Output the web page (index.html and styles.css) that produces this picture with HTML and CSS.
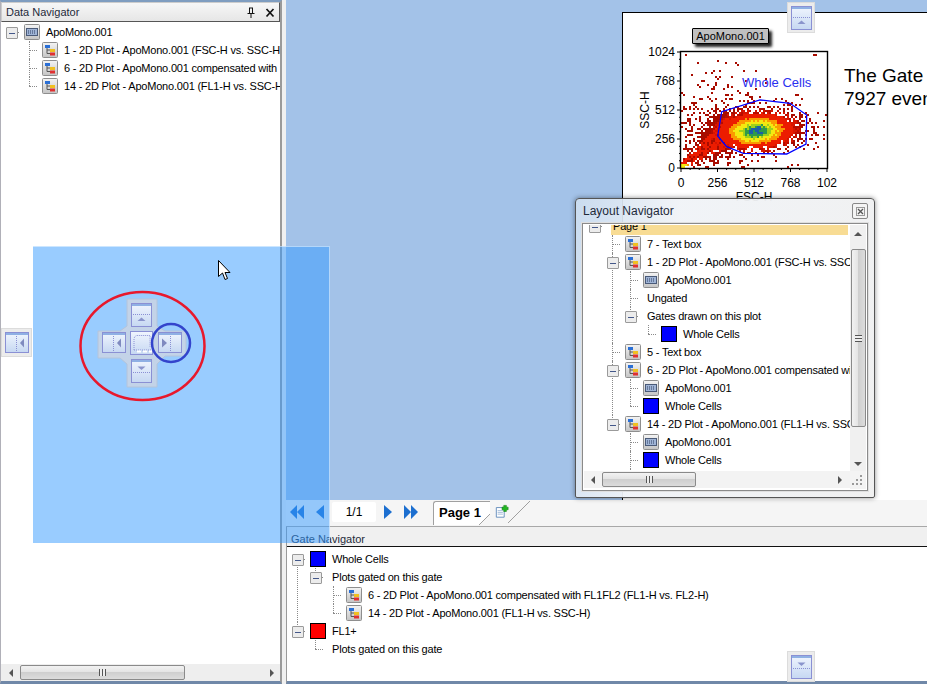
FILE: index.html
```html
<!DOCTYPE html>
<html lang="en">

<head>
    <meta charset="UTF-8">
    <title>Layout Navigator</title>
    <link rel="stylesheet" href="styles.css">
</head>

<body>
    <!-- shared icons -->
    <svg class="defs" width="0" height="0">
        <defs>
            <linearGradient id="iconbg" x1="0" y1="0" x2="0" y2="1">
                <stop offset="0" stop-color="#f4f4f4" />
                <stop offset="1" stop-color="#c4c4c4" />
            </linearGradient>
            <linearGradient id="dockbg" x1="0" y1="0" x2="0" y2="1">
                <stop offset="0" stop-color="#f0f5fe" />
                <stop offset="1" stop-color="#c6d8f2" />
            </linearGradient>
            <symbol id="plot" viewBox="0 0 16 16">
                <rect x=".5" y=".5" width="15" height="15" rx="1" fill="url(#iconbg)" stroke="#8e8e8e" />
                <path d="M5 5V11.5H9M5 8H9" fill="none" stroke="#555" />
                <rect x="3" y="3" width="5" height="3" fill="#2a6fd6" />
                <rect x="8" y="7" width="5" height="3" fill="#f0c020" />
                <rect x="8" y="10.5" width="5" height="3" fill="#e03030" />
            </symbol>
            <symbol id="fcs" viewBox="0 0 16 16">
                <rect x=".5" y=".5" width="15" height="15" rx="1" fill="url(#iconbg)" stroke="#8e8e8e" />
                <rect x="2.5" y="4.5" width="11" height="7" fill="#9fb4d6" stroke="#4a5a78" />
                <path d="M4 7H12M4 9H12" stroke="#2f3f60" stroke-dasharray="1 1" />
            </symbol>
            <symbol id="dock-up" viewBox="0 0 21 24">
                <rect x=".5" y=".5" width="20" height="23" fill="url(#dockbg)" stroke="#8a90d4" />
                <rect x="1" y="1" width="19" height="2" fill="#8fb0e4" />
                <path d="M2 11.5H19" stroke="#8a90d4" stroke-dasharray="1 1" />
                <path d="M10.5 14.5L14.5 18H6.5Z" fill="#8a94cc" />
            </symbol>
            <symbol id="dock-down" viewBox="0 0 21 24">
                <rect x=".5" y=".5" width="20" height="23" fill="url(#dockbg)" stroke="#8a90d4" />
                <rect x="1" y="1" width="19" height="2" fill="#8fb0e4" />
                <path d="M2 13.5H19" stroke="#8a90d4" stroke-dasharray="1 1" />
                <path d="M10.5 11L14.5 7.5H6.5Z" fill="#8a94cc" />
            </symbol>
            <symbol id="dock-left" viewBox="0 0 24 21">
                <rect x=".5" y=".5" width="23" height="20" fill="url(#dockbg)" stroke="#8a90d4" />
                <rect x="1" y="1" width="22" height="2" fill="#8fb0e4" />
                <path d="M11.5 4V20" stroke="#8a90d4" stroke-dasharray="1 1" />
                <path d="M15 11L19 6.5V15.5Z" fill="#7f8abf" />
            </symbol>
            <symbol id="dock-right" viewBox="0 0 24 21">
                <rect x=".5" y=".5" width="23" height="20" fill="url(#dockbg)" stroke="#8a90d4" />
                <rect x="1" y="1" width="22" height="2" fill="#8fb0e4" />
                <path d="M12.5 4V20" stroke="#8a90d4" stroke-dasharray="1 1" />
                <path d="M9 11L4 6.5V15.5Z" fill="#7f8abf" />
            </symbol>
        </defs>
    </svg>

    <div class="app">
        <!-- left pane -->
        <section class="data-pane">
            <header class="pane-title">
                <span>Data Navigator</span>
                <span class="pane-btns">
                    <svg width="10" height="11" viewBox="0 0 10 11">
                        <path d="M3 1H7M3.5 1V6M6.5 1V6M1.5 6.5H8.5M5 7V11" fill="none" stroke="#111" />
                    </svg>
                    <svg width="10" height="11" viewBox="0 0 10 11">
                        <path d="M1.5 2L8.5 9.5M8.5 2L1.5 9.5" fill="none" stroke="#111" stroke-width="1.7" />
                    </svg>
                </span>
            </header>
            <div class="pane-body">
                <ul class="tree tree-data">
                    <li>
                        <div class="node"><span class="tw open"></span><svg class="ic"><use href="#fcs" /></svg><span class="lbl">ApoMono.001</span></div>
                        <ul>
                            <li><div class="node"><span class="tw"></span><svg class="ic"><use href="#plot" /></svg><span class="lbl">1 - 2D Plot - ApoMono.001 (FSC-H vs. SSC-H)</span></div></li>
                            <li><div class="node"><span class="tw"></span><svg class="ic"><use href="#plot" /></svg><span class="lbl">6 - 2D Plot - ApoMono.001 compensated with FL1FL2 (FL1-H vs. FL2-H)</span></div></li>
                            <li><div class="node"><span class="tw"></span><svg class="ic"><use href="#plot" /></svg><span class="lbl">14 - 2D Plot - ApoMono.001 (FL1-H vs. SSC-H)</span></div></li>
                        </ul>
                    </li>
                </ul>
            </div>
            <div class="hscroll hscroll-data">
                <span class="arr arr-l"></span>
                <span class="hthumb"><i></i></span>
                <span class="arr arr-r"></span>
            </div>
        </section>

        <div class="splitter"></div>

        <!-- right side -->
        <section class="main">
            <div class="doc-area">
                <div class="sheet">
                    <div class="plot-box">
                        <div class="plot-name">ApoMono.001</div>
                        <svg id="plot-svg" class="plot-svg" width="205" height="190" viewBox="0 0 205 190"></svg>
                    </div>
                    <div class="gate-text">
                        <div>The Gate</div>
                        <div>7927 events</div>
                    </div>
                </div>
            </div>

            <div class="tab-strip">
                <span class="pager">
                    <svg width="15" height="14" viewBox="0 0 15 14"><path d="M7 0V14L0 7ZM14 0V14L7 7Z" fill="#1c6fd0" /></svg>
                    <svg class="gap-l" width="10" height="14" viewBox="0 0 10 14"><path d="M9 0V14L1 7Z" fill="#1c6fd0" /></svg>
                </span>
                <span class="page-input">1/1</span>
                <span class="pager">
                    <svg width="10" height="14" viewBox="0 0 10 14"><path d="M1 0V14L9 7Z" fill="#1c6fd0" /></svg>
                    <svg class="gap-l" width="15" height="14" viewBox="0 0 15 14"><path d="M1 0V14L8 7ZM8 0V14L15 7Z" fill="#1c6fd0" /></svg>
                </span>
                <span class="tab">Page 1</span>
                <span class="tab-new">
                    <svg width="14" height="15" viewBox="0 0 16 16">
                        <path d="M1.5 3.5H10.5V14.5H1.5Z" fill="#fff" stroke="#5a86b8" />
                        <path d="M3 7H9M3 9H9M3 11H9" stroke="#9ab6d6" />
                        <path d="M8 3H10V1H13V3H15V6H13V8H10V6H8Z" fill="#22b822" stroke="#0c7a0c" stroke-width=".6" />
                    </svg>
                </span>
            </div>

            <section class="gate-pane">
                <header class="gate-title">Gate Navigator</header>
                <div class="gate-body">
                    <ul class="tree tree-gate">
                        <li>
                            <div class="node"><span class="tw open"></span><span class="swatch blue"></span><span class="lbl">Whole Cells</span></div>
                            <ul>
                                <li>
                                    <div class="node"><span class="tw open"></span><span class="lbl bare">Plots gated on this gate</span></div>
                                    <ul>
                                        <li><div class="node"><span class="tw"></span><svg class="ic"><use href="#plot" /></svg><span class="lbl">6 - 2D Plot - ApoMono.001 compensated with FL1FL2 (FL1-H vs. FL2-H)</span></div></li>
                                        <li><div class="node"><span class="tw"></span><svg class="ic"><use href="#plot" /></svg><span class="lbl">14 - 2D Plot - ApoMono.001 (FL1-H vs. SSC-H)</span></div></li>
                                    </ul>
                                </li>
                            </ul>
                        </li>
                        <li>
                            <div class="node"><span class="tw open"></span><span class="swatch red"></span><span class="lbl">FL1+</span></div>
                            <ul>
                                <li><div class="node"><span class="tw"></span><span class="lbl bare">Plots gated on this gate</span></div></li>
                            </ul>
                        </li>
                    </ul>
                </div>
            </section>
        </section>

        <!-- dock preview + guides, dragged over the panes -->
        <div class="dock-preview"></div>

        <svg class="guide-cross" width="140" height="120" viewBox="70 285 140 120">
            <path d="M127 299H157V326L165 331H186V356H165L157 364V387H127V364L120 358H98V331H120L127 326Z" fill="#c3d3e8" stroke="#b4c4da" />
            <use href="#dock-up" x="131" y="303" width="21" height="24" />
            <use href="#dock-left" x="102" y="332" width="24" height="21" />
            <use href="#dock-right" x="158" y="332" width="24" height="21" />
            <use href="#dock-down" x="131" y="359" width="21" height="24" />
            <rect x="130.500" y="331.500" width="22" height="23" fill="url(#dockbg)" stroke="#8a90d4" />
            <path d="M134 350V338L136 335.500H150V347M134 350H152" fill="none" stroke="#8a90d4" stroke-dasharray="1 1" />
            <path d="M137 351.500H141M143 351.500H147M149 351.500H152" stroke="#fff" stroke-width="2" />
            <ellipse cx="142.500" cy="346" rx="62" ry="54" fill="none" stroke="#e8182c" stroke-width="2.500" />
            <circle cx="171" cy="343" r="19" fill="none" stroke="#3344cc" stroke-width="2.500" />
        </svg>

        <svg class="cursor" width="13" height="21" viewBox="0 0 13 21">
            <path d="M.5 .5V16.500L4.500 13L7 19.500L9.500 18.500L7 12.500H12Z" fill="#fff" stroke="#000" />
        </svg>

        <div class="guide guide-left"><svg width="24" height="21"><use href="#dock-left" /></svg></div>
        <div class="guide guide-top"><svg width="21" height="24"><use href="#dock-up" /></svg></div>
        <div class="guide guide-bottom"><svg width="21" height="24"><use href="#dock-down" /></svg></div>

        <!-- floating window -->
        <div class="win">
            <div class="win-title">
                <span>Layout Navigator</span>
                <span class="win-close">
                    <svg width="9" height="9" viewBox="0 0 9 9">
                        <rect x=".5" y=".5" width="8" height="8" fill="none" stroke="#999" />
                        <path d="M2 2L7 7M7 2L2 7" stroke="#555" stroke-width="1.300" />
                    </svg>
                </span>
            </div>
            <div class="win-body">
                <div class="win-tree">
                    <ul class="tree tree-layout">
                        <li>
                            <div class="node"><span class="tw open"></span><span class="lbl bare page-row">Page 1</span></div>
                            <ul>
                                <li><div class="node"><span class="tw"></span><svg class="ic"><use href="#plot" /></svg><span class="lbl">7 - Text box</span></div></li>
                                <li>
                                    <div class="node"><span class="tw open"></span><svg class="ic"><use href="#plot" /></svg><span class="lbl">1 - 2D Plot - ApoMono.001 (FSC-H vs. SSC-H)</span></div>
                                    <ul>
                                        <li><div class="node"><span class="tw"></span><svg class="ic"><use href="#fcs" /></svg><span class="lbl">ApoMono.001</span></div></li>
                                        <li><div class="node"><span class="tw"></span><span class="lbl bare">Ungated</span></div></li>
                                        <li>
                                            <div class="node"><span class="tw open"></span><span class="lbl bare">Gates drawn on this plot</span></div>
                                            <ul>
                                                <li><div class="node"><span class="tw"></span><span class="swatch blue"></span><span class="lbl">Whole Cells</span></div></li>
                                            </ul>
                                        </li>
                                    </ul>
                                </li>
                                <li><div class="node"><span class="tw"></span><svg class="ic"><use href="#plot" /></svg><span class="lbl">5 - Text box</span></div></li>
                                <li>
                                    <div class="node"><span class="tw open"></span><svg class="ic"><use href="#plot" /></svg><span class="lbl">6 - 2D Plot - ApoMono.001 compensated with FL1FL2</span></div>
                                    <ul>
                                        <li><div class="node"><span class="tw"></span><svg class="ic"><use href="#fcs" /></svg><span class="lbl">ApoMono.001</span></div></li>
                                        <li><div class="node"><span class="tw"></span><span class="swatch blue"></span><span class="lbl">Whole Cells</span></div></li>
                                    </ul>
                                </li>
                                <li>
                                    <div class="node"><span class="tw open"></span><svg class="ic"><use href="#plot" /></svg><span class="lbl">14 - 2D Plot - ApoMono.001 (FL1-H vs. SSC-H)</span></div>
                                    <ul>
                                        <li><div class="node"><span class="tw"></span><svg class="ic"><use href="#fcs" /></svg><span class="lbl">ApoMono.001</span></div></li>
                                        <li><div class="node"><span class="tw"></span><span class="swatch blue"></span><span class="lbl">Whole Cells</span></div></li>
                                        <li><div class="node"><span class="tw"></span></div></li>
                                    </ul>
                                </li>
                            </ul>
                        </li>
                    </ul>
                </div>
                <div class="vscroll">
                    <span class="arr arr-u"></span>
                    <span class="vthumb"><i></i></span>
                    <span class="arr arr-d"></span>
                </div>
                <div class="hscroll hscroll-win">
                    <span class="arr arr-l"></span>
                    <span class="hthumb"><i></i></span>
                    <span class="arr arr-r"></span>
                </div>
                <div class="size-grip"></div>
            </div>
        </div>
    </div>

    <script src="plot.js"></script>
</body>

</html>
```

FILE: styles.css
```css
* {
    box-sizing: border-box;
}

body {
    margin: 0;
    font-family: "Liberation Sans", Arial, sans-serif;
    font-size: 12px;
    color: #000;
    background-color: #fff;
}

.defs {
    position: absolute;
}

.app {
    position: relative;
    display: flex;
    width: 927px;
    height: 684px;
    overflow: hidden;
    background-color: #f0f0f0;
}

/* left pane */
.data-pane {
    width: 282px;
    height: 100%;
    display: flex;
    flex-direction: column;
    border-top: 2px solid #7f9dc0;
    border-left: 1px solid #b0b0b8;
    border-right: 2px solid #9a9a9a;
    border-bottom: 3px solid #7088a8;
    background-color: #fff;
}

.pane-title {
    height: 20px;
    flex: none;
    display: flex;
    justify-content: space-between;
    align-items: center;
    padding: 0 4px 0 4px;
    font-size: 11px;
    color: #1e2a3a;
    background-image: linear-gradient(#f7f7f7, #e6e6e6);
    border: 1px solid #555;
    border-left-color: #ccc;
    border-top-color: #ccc;
}

.pane-btns {
    display: flex;
    gap: 9px;
}

.pane-body {
    flex: 1;
    overflow: hidden;
    padding-top: 1px;
}

.splitter {
    width: 4px;
    flex: none;
    background-color: #f0f0f0;
}

.main {
    flex: 1;
    min-width: 0;
    height: 100%;
    display: flex;
    flex-direction: column;
}

.doc-area {
    height: 500px;
    flex: none;
    display: flex;
    justify-content: flex-end;
    padding-top: 12px;
    background-color: #a3c2e8;
}

.sheet {
    position: relative;
    width: 305px;
    background-color: #fff;
    border-left: 1px solid #000;
    border-top: 1px solid #000;
    overflow: hidden;
}

.plot-box {
    position: absolute;
    left: 10px;
    top: 14px;
    width: 210px;
    height: 190px;
}

.plot-name {
    position: absolute;
    left: 59px;
    top: 1px;
    width: 77px;
    height: 16px;
    line-height: 14px;
    font-size: 11px;
    text-align: center;
    background-color: #c0c0c0;
    border: 1px solid #000;
    border-radius: 1px;
    box-shadow: 3px 3px 3px #222;
}

.plot-svg {
    display: block;
}

.plot-svg text {
    font-family: "Liberation Sans", Arial, sans-serif;
    font-size: 12px;
}

.plot-svg .gate-name {
    font-size: 13px;
}

.gate-text {
    position: absolute;
    left: 221px;
    top: 51px;
    font-size: 19px;
    line-height: 23px;
    white-space: nowrap;
}

/* page tabs */
.tab-strip {
    height: 27px;
    flex: none;
    display: flex;
    align-items: center;
    padding: 0 0 2px 4px;
    background-color: #f5f5f5;
    border-bottom: 1px solid #a8a8a8;
}

.pager {
    display: flex;
    align-items: center;
}

.gap-l {
    margin-left: 10px;
}

.page-input {
    width: 44px;
    height: 20px;
    margin: 0 7px;
    line-height: 20px;
    text-align: center;
    background-color: #fff;
    border-radius: 2px;
}

.tab {
    margin-left: 15px;
    width: 57px;
    height: 24px;
    margin-top: 1px;
    padding-left: 5px;
    line-height: 22px;
    font-size: 13px;
    font-weight: bold;
    border: 1px solid #a0a0a0;
    border-right: none;
    border-bottom: none;
    border-radius: 3px 0 0 0;
    background-color: #fff;
    background-image: linear-gradient(to bottom right, transparent 46%, #a0a0a0 46%, #a0a0a0 54%, #f5f5f5 54%);
    background-repeat: no-repeat;
    background-size: 11px 11px;
    background-position: right bottom;
}

.tab-new {
    width: 44px;
    height: 24px;
    margin-left: -4px;
    margin-top: 1px;
    padding: 3px 0 0 9px;
    background-image:
        linear-gradient(to bottom right, transparent 48%, #a0a0a0 48%, #a0a0a0 52%, transparent 52%);
    background-repeat: no-repeat;
    background-size: 22px 22px;
    background-position: right top;
}

/* gate navigator */
.gate-pane {
    flex: 1;
    min-height: 0;
    display: flex;
    flex-direction: column;
    border-left: 1px solid #9a9a9a;
    border-bottom: 3px solid #7088a8;
    background-color: #fff;
}

.gate-title {
    height: 20px;
    flex: none;
    padding: 5px 0 0 4px;
    line-height: 14px;
    font-size: 11px;
    color: #1e2a3a;
    background-color: #f0f0f0;
    border-bottom: 1px solid #111;
}

.gate-body {
    flex: 1;
    overflow: hidden;
    padding-top: 3px;
}

/* trees */
.tree,
.tree ul {
    list-style: none;
    margin: 0;
    padding: 0;
    font-size: 11px;
    letter-spacing: -.2px;
}

.tree ul {
    margin-left: 18px;
}

.tree li {
    position: relative;
}

.tree li::before {
    content: "";
    position: absolute;
    left: 5px;
    top: 0;
    bottom: 0;
    border-left: 1px dotted #8a8a8a;
}

.tree li:last-child::before {
    bottom: auto;
    height: 9px;
}

.tree > li:first-child::before {
    top: 9px;
    height: auto;
}

.tree > li:last-child::before {
    height: 0;
}

.tree-gate > li:first-child::before {
    bottom: 0;
}

.tree-gate > li:last-child::before {
    top: 0;
    height: 9px;
}

.tree-data {
    padding-left: 5px;
    padding-top: 0;
}

.tree-gate {
    padding-left: 5px;
    white-space: nowrap;
}

.tree-layout {
    padding-left: 5px;
    margin-top: -8px;
}

.node {
    position: relative;
    display: flex;
    align-items: center;
    height: 18px;
    white-space: nowrap;
}

.tw {
    position: relative;
    width: 18px;
    height: 18px;
    flex: none;
}

.tw::after {
    content: "";
    position: absolute;
    left: 5px;
    top: 9px;
    width: 8px;
    border-top: 1px dotted #8a8a8a;
}

.tw.open::before {
    content: "";
    position: absolute;
    z-index: 1;
    left: 0;
    top: 4px;
    width: 10px;
    height: 10px;
    border: 1px solid #9a9a9a;
    border-radius: 1px;
    background-color: #ececec;
    background-image: linear-gradient(#44588a, #44588a);
    background-repeat: no-repeat;
    background-size: 6px 1px;
    background-position: center;
}

.ic {
    width: 16px;
    height: 16px;
    flex: none;
}

.swatch {
    width: 16px;
    height: 16px;
    flex: none;
    border: 1px solid #000;
}

.swatch.blue {
    background-color: #0000ff;
}

.swatch.red {
    background-color: #ff0000;
}

.lbl {
    margin-left: 6px;
}

.lbl.bare {
    margin-left: 4px;
}

.page-row {
    flex: 1;
    height: 18px;
    line-height: 18px;
    padding-left: 2px;
    margin-left: 2px;
    background-color: #f8dc94;
}

/* scrollbars */
.hscroll {
    display: flex;
    align-items: center;
    position: relative;
    height: 17px;
    flex: none;
    background-color: #eeeeee;
}

.hthumb {
    height: 15px;
    border: 1px solid #8a8a8a;
    border-radius: 2px;
    background-image: linear-gradient(#f2f2f2, #e4e4e4 45%, #cfcfcf 50%, #dcdcdc);
    display: flex;
    justify-content: center;
    align-items: center;
}

.hthumb i {
    width: 7px;
    height: 7px;
    background-image: repeating-linear-gradient(to right, #555 0 1px, #eee 1px 3px);
}

.hscroll-data .hthumb {
    width: 165px;
    margin-left: 7px;
}

.hscroll-data .arr-l {
    margin-left: 8px;
}

.hscroll-data .arr-r {
    position: absolute;
    right: 6px;
}

.hscroll-win {
    background-color: #f3f3f3;
}

.hscroll-win .arr-l {
    margin-left: 7px;
}

.hscroll-win .hthumb {
    width: 94px;
    margin-left: 7px;
}

.hscroll-win .arr-r {
    position: absolute;
    right: 8px;
}

.arr {
    width: 0;
    height: 0;
    flex: none;
    border-style: solid;
    border-color: transparent;
}

.arr-l {
    border-width: 4px 4px 4px 0;
    border-right-color: #555;
}

.arr-r {
    border-width: 4px 0 4px 4px;
    border-left-color: #555;
}

.arr-u {
    border-width: 0 4px 4px 4px;
    border-bottom-color: #555;
}

.arr-d {
    border-width: 4px 4px 0 4px;
    border-top-color: #555;
}

/* floating window */
.win {
    position: absolute;
    left: 575px;
    top: 198px;
    width: 300px;
    height: 300px;
    display: flex;
    flex-direction: column;
    padding: 0 6px 6px 6px;
    border: 1px solid #555;
    border-radius: 4px 4px 2px 2px;
    background-image: linear-gradient(100deg, rgba(205, 222, 240, .92), rgba(240, 243, 247, .95) 30%, rgba(240, 240, 240, .97));
    box-shadow: 0 0 5px rgba(0, 0, 0, .45);
}

.win-title {
    height: 24px;
    flex: none;
    display: flex;
    justify-content: space-between;
    align-items: center;
    padding-left: 1px;
    color: #1e2a3a;
}

.win-close {
    width: 16px;
    height: 16px;
    display: flex;
    justify-content: center;
    align-items: center;
    background-color: #f4f4f4;
    border: 1px solid #888;
    border-radius: 2px;
}

.win-body {
    flex: 1;
    min-height: 0;
    display: grid;
    grid-template-columns: 1fr 16px;
    grid-template-rows: 1fr 18px;
    padding: 1px;
    background-color: #fff;
    border: 1px solid #8a8a8a;
    outline: 1px solid #dfdfdf;
}

.win-tree {
    overflow: hidden;
    background-color: #fff;
    padding-right: 2px;
}

.vscroll {
    position: relative;
    display: flex;
    flex-direction: column;
    align-items: center;
    background-color: #f0f0f0;
    padding-top: 7px;
}

.vthumb {
    width: 15px;
    height: 178px;
    margin-top: 13px;
    border: 1px solid #8a8a8a;
    border-radius: 2px;
    background-image: linear-gradient(to right, #f2f2f2, #e4e4e4 45%, #cfcfcf 50%, #dcdcdc);
    display: flex;
    justify-content: center;
    align-items: center;
}

.vthumb i {
    width: 7px;
    height: 7px;
    background-image: repeating-linear-gradient(#555 0 1px, #eee 1px 3px);
}

.vscroll .arr-d {
    position: absolute;
    bottom: 5px;
}

.size-grip {
    background-color: #f3f3f3;
    background-image:
        radial-gradient(circle at 11px 13px, #9a9a9a 1px, transparent 1.5px),
        radial-gradient(circle at 7px 13px, #9a9a9a 1px, transparent 1.5px),
        radial-gradient(circle at 3px 13px, #9a9a9a 1px, transparent 1.5px),
        radial-gradient(circle at 11px 9px, #9a9a9a 1px, transparent 1.5px),
        radial-gradient(circle at 7px 9px, #9a9a9a 1px, transparent 1.5px),
        radial-gradient(circle at 11px 5px, #9a9a9a 1px, transparent 1.5px);
}

/* docking overlay */
.dock-preview {
    position: absolute;
    left: 33px;
    top: 246px;
    width: 297px;
    height: 297px;
    background-color: rgba(51, 153, 255, .5);
    border-top: 1px solid rgba(255, 255, 255, .5);
    border-right: 1px solid rgba(255, 255, 255, .5);
}

.guide-cross {
    position: absolute;
    left: 70px;
    top: 285px;
}

.cursor {
    position: absolute;
    left: 218px;
    top: 260px;
}

.guide {
    position: absolute;
    display: flex;
    justify-content: center;
    align-items: center;
    background-color: #ececec;
    border: 1px solid #dcdcdc;
}

.guide-left {
    left: 1px;
    top: 328px;
    width: 31px;
    height: 29px;
}

.guide-top {
    left: 787px;
    top: 2px;
    width: 28px;
    height: 31px;
}

.guide-bottom {
    left: 787px;
    top: 651px;
    width: 28px;
    height: 31px;
}

.guide svg {
    display: block;
}
```

FILE: plot.js
```js
// fake cytometry plot, fixed seed so it looks the same on every load
var svg = document.getElementById('plot-svg')
var NS = 'http://www.w3.org/2000/svg'
var ox = 48, oy = 25, w = 146, h = 116

var seed = 4711
function rnd() {
    seed = (seed * 16807) % 2147483647
    return seed / 2147483647
}

function el(name, attrs, parent) {
    var e = document.createElementNS(NS, name)
    for (var k in attrs) e.setAttribute(k, attrs[k])
    ;(parent || svg).appendChild(e)
    return e
}

function gauss(x, y, cx, cy, sx, sy) {
    var dx = (x - cx) / sx, dy = (y - cy) / sy
    return Math.exp(-(dx * dx + dy * dy) / 2)
}

function colorFor(d) {
    if (d > .96) return '#1c5fa8'
    if (d > .88) return '#2f9a4a'
    if (d > .78) return '#9fd01a'
    if (d > .62) return '#f4e810'
    if (d > .46) return '#fa9a00'
    if (d > .24) return '#ec1c00'
    if (d > .12) return rnd() > .4 ? '#d81400' : '#b80c00'
    return '#a80c00'
}

var cells = el('g', {})
for (var cy = 0; cy < h; cy += 2) {
    for (var cx = 0; cx < w; cx += 2) {
        var tilt = (cy - 78) + (cx - 74) * .05
        var main = gauss(cx, 78 + tilt, 74, 78, 22, 10.5)
        var halo = gauss(cx, 78 + tilt, 74, 78, 27, 12)
        // tail going to the lower left corner
        var along = cx / 42
        var tail = 0
        if (along < 1.1) tail = Math.exp(-Math.pow((cy - (112 - along * 30)) / (4 + along * 10), 2) / 2)
        var wide = gauss(cx, cy, 35, 60, 32, 24)
        var corner = gauss(cx, cy, 2, 113, 5, 2.5)

        var p = Math.min(1, halo * 2.2) + tail * .85 + wide * .22 + .006
        if (rnd() > p) continue

        var d = main * (.93 + rnd() * .14)
        if (main < .1) d = .06
        if (tail > .6 && rnd() > .35) d = Math.max(d, .3)
        d = Math.max(d, corner * .75)
        el('rect', { x: ox + cx, y: oy + cy, width: 2, height: 2, fill: colorFor(d) }, cells)
    }
}

// frame and ticks
el('rect', { x: ox - .5, y: oy - .5, width: w + 1, height: h + 1, fill: 'none', stroke: '#000', 'stroke-width': 1.4 })
var path = ''
for (var i = 0; i <= 16; i++) {
    var len = i % 4 == 0 ? 4 : 2
    var tx = ox + w * i / 16, ty = oy + h * i / 16
    path += 'M' + tx + ' ' + (oy + h) + 'v' + len
    path += 'M' + ox + ' ' + ty + 'h-' + len
}
el('path', { d: path, stroke: '#000', fill: 'none' })

function label(txt, x, y, anchor, extra) {
    var t = el('text', Object.assign({ x: x, y: y, 'text-anchor': anchor }, extra || {}))
    t.textContent = txt
    return t
}

var ticks = ['0', '256', '512', '768', '1024']
for (var n = 0; n < 5; n++) {
    label(ticks[n], ox - 6, oy + h - h * n / 4 + 4, 'end')
}
var xticks = ['0', '256', '512', '768', '102']
for (var m = 0; m < 5; m++) {
    label(xticks[m], ox + w * m / 4, oy + h + 19, 'middle')
}
label('FSC-H', ox + 73, oy + h + 33, 'middle')
label('SSC-H', 0, 0, 'middle', { transform: 'translate(16 ' + (oy + 58) + ') rotate(-90)' })

// gate outline, page coordinates minus the plot position
var gate = [[717.7, 136], [721.7, 111.7], [760, 100], [790, 103.3], [806.7, 115], [806, 144], [786.7, 154], [743.3, 153.3], [726.7, 146.7]]
var pts = gate.map(function (p) { return (p[0] - 633) + ',' + (p[1] - 27) }).join(' ')
el('polygon', { points: pts, fill: 'none', stroke: '#0000ff', 'stroke-width': 1.3 })
label('Whole Cells', 109, 60, 'start', { fill: '#2a30f0', 'class': 'gate-name' })
```
